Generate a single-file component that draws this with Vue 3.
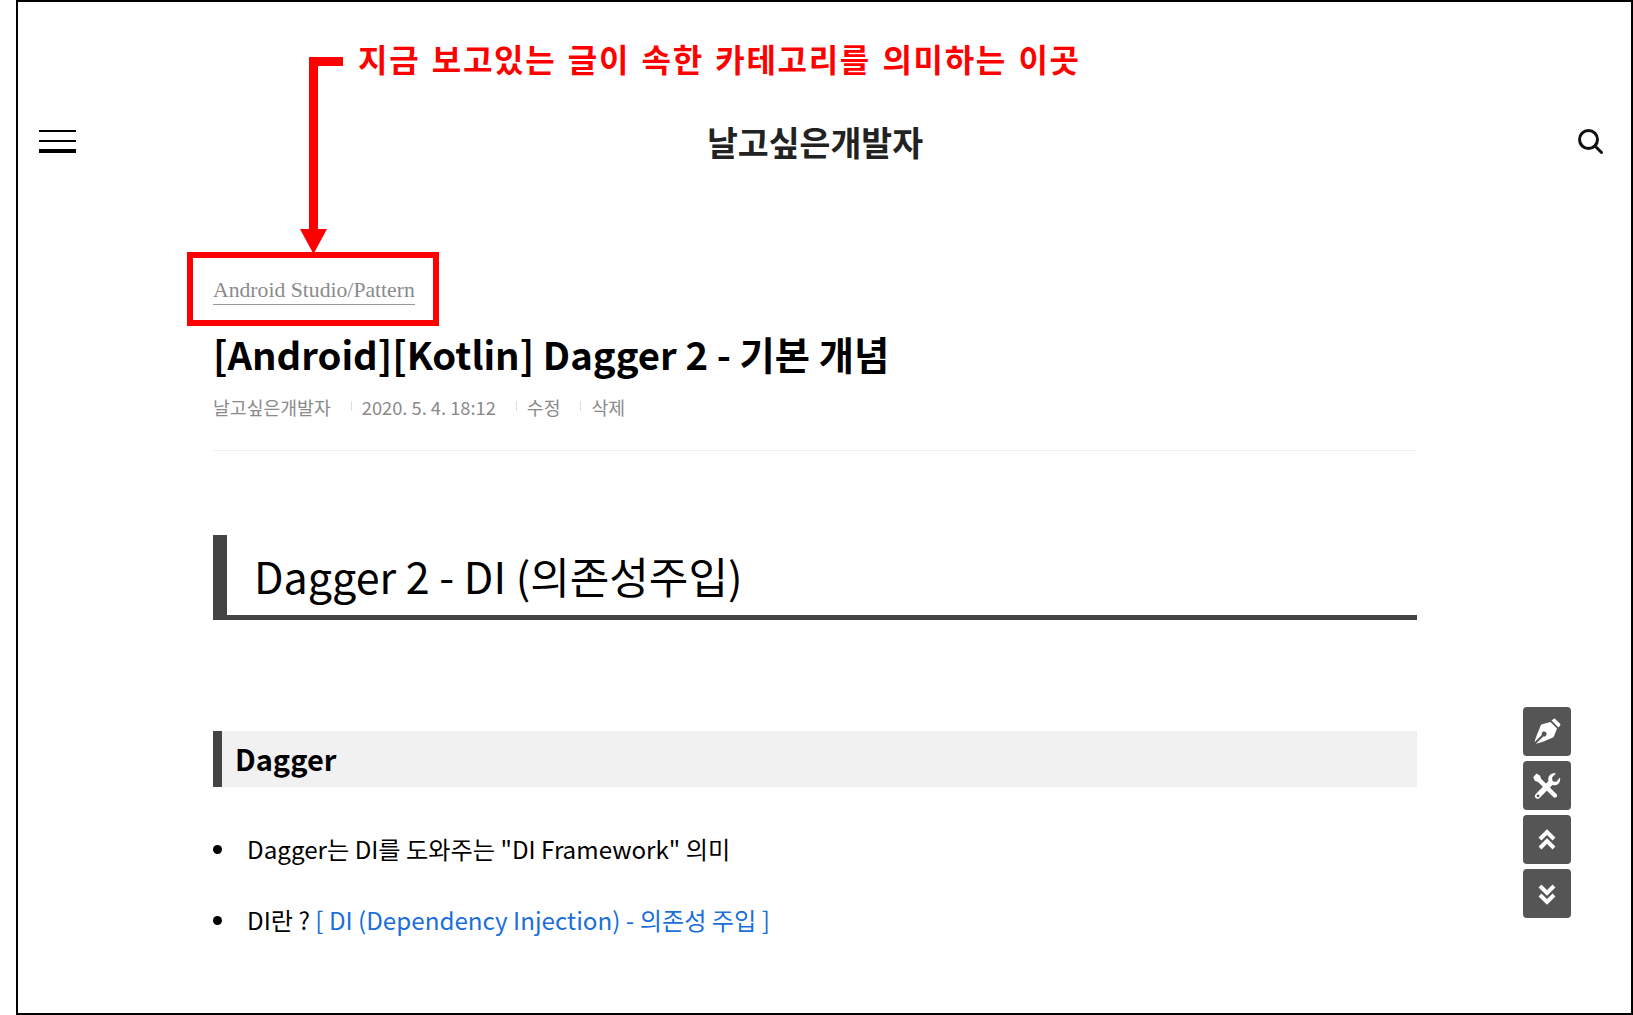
<template>
  <div class="frame">
    <header class="top">
      <div class="burger"><span></span><span></span><span></span></div>
      <div class="blog-name">날고싶은개발자</div>
      <svg class="search" width="26" height="26" viewBox="0 0 26 26" fill="none" stroke="#111" stroke-width="3">
        <circle cx="11.5" cy="11.5" r="9" />
        <path d="M18 18l6.5 6.5" stroke-linecap="round" />
      </svg>
    </header>

    <article class="post">
      <div class="category"><a>Android Studio/Pattern</a></div>
      <h1 class="title">[Android][Kotlin] Dagger 2 - 기본 개념</h1>
      <div class="meta">
        <span v-for="item in metaItems" :key="item">{{ item }}</span>
      </div>

      <h2 class="section">Dagger 2 - DI (의존성주입)</h2>
      <h3 class="sub">Dagger</h3>
      <ul class="list">
        <li>Dagger는 DI를 도와주는 "DI Framework" 의미</li>
        <li>DI란 ? <a>[ DI (Dependency Injection) - 의존성 주입 ]</a></li>
      </ul>
    </article>

    <div class="float-btns">
      <button>
        <svg width="30" height="30" viewBox="0 0 30 30" fill="#fff">
          <path d="M19.600 3.600l1.900-1.700c.6-.5 1.200-.5 1.700 0l4.900 4.900c.5.5.5 1.100 0 1.700l-1.700 1.900z" />
          <path fill-rule="evenodd" d="M18.400 5l6.600 6.600-3 7.600c-.3.800-.8 1.200-1.500 1.500l-9 3.700c-2.500 1-5.200 1.800-7.600 2.400l7.400-7.400a2.500 2.500 0 1 0-1.500-1.500l-7.300 7.400c.6-2.500 1.400-5.100 2.400-7.500l3.700-9c.3-.7.700-1.200 1.500-1.500z" />
        </svg>
      </button>
      <button>
        <svg width="30" height="30" viewBox="0 0 30 30" fill="#fff">
          <path d="M4.500 2.500l3.600 2.200 1 3.100 15.300 15.200c1 1 1 2.200 0 3.100-1 1-2.200 1-3.100 0L6 10.900l-3-.9L1.200 6.300z" />
          <path fill-rule="evenodd" d="M28 6.500c.6 2.500 0 4.900-1.800 6.400-1.700 1.400-3.800 1.700-5.800 1L7.600 26.900c-1.200 1.200-3 1.200-4 .2s-1-2.900.2-4L16.500 10c-.7-2.200-.2-4.400 1.500-6 1.500-1.400 3.700-2 6-1.400l-4 4 .6 3.600 3.500.7zM6 23.500a1.400 1.400 0 1 0 .1 2.800 1.400 1.400 0 0 0-.1-2.800z" />
        </svg>
      </button>
      <button>
        <svg width="24" height="24" viewBox="0 0 24 24" fill="none" stroke="#fff" stroke-width="4">
          <path d="M5 11l7-7 7 7M5 20l7-7 7 7" />
        </svg>
      </button>
      <button>
        <svg width="24" height="24" viewBox="0 0 24 24" fill="none" stroke="#fff" stroke-width="4">
          <path d="M5 4l7 7 7-7M5 13l7 7 7-7" />
        </svg>
      </button>
    </div>

    <!-- red annotation drawn over the screenshot -->
    <div class="note">지금 보고있는 글이 속한 카테고리를 의미하는 이곳</div>
    <svg class="arrow" width="50" height="200" viewBox="0 0 50 200" fill="#f00">
      <path d="M9 0h34v9H18v163h9l-13.500 25L0 172h9z" />
    </svg>
    <div class="note-box"></div>
  </div>
</template>

<script setup>
const metaItems = ['날고싶은개발자', '2020. 5. 4. 18:12', '수정', '삭제'];
</script>

<style>
html,
body {
  background: #fff;
}
</style>

<style scoped>
.frame {
  position: relative;
  box-sizing: border-box;
  margin-left: 16px;
  height: 1015px;
  border: 2px solid #000;
  overflow: hidden;
  font-family: "Noto Sans CJK KR", "Noto Sans", sans-serif;
  color: #000;
}

.top {
  display: grid;
  grid-template-columns: 1fr auto 1fr;
  align-items: center;
  height: 78px;
  margin-top: 100px;
  padding: 0 28px 0 21px;
}

.burger {
  display: flex;
  flex-direction: column;
  gap: 8px;
  width: 37px;
}

.burger span {
  display: block;
  height: 2px;
  background: #000;
}

.burger span:nth-child(2) {
  height: 2.5px;
}

.burger span:last-child {
  height: 3.5px;
  margin-top: -1px;
}

.blog-name {
  margin-right: 12px;
  font-size: 33.6px;
  font-weight: 700;
  color: #222;
}

.search {
  justify-self: end;
}

.post {
  width: 1204px;
  margin-left: 195px;
  padding-top: 96px;
}

.category {
  height: 32px;
  font-family: "Liberation Serif", serif;
  font-size: 21.7px;
  line-height: 28px;
  color: #8a8a8a;
}

.category a {
  display: inline-block;
  border-bottom: 1px solid #999;
}

.title {
  margin: 18px 0 0;
  font-size: 38.3px;
  line-height: 56px;
  font-weight: 700;
}

.meta {
  display: flex;
  align-items: center;
  margin-top: 10px;
  padding-bottom: 28px;
  border-bottom: 1px solid #eee;
  font-size: 18.3px;
  line-height: 30px;
  color: #8a8a8a;
}

.meta span + span {
  position: relative;
  margin-left: 31px;
}

.meta span + span::before {
  content: "";
  position: absolute;
  left: -11px;
  top: 9px;
  width: 1px;
  height: 10px;
  background: #ddd;
}

.section {
  box-sizing: border-box;
  height: 85px;
  margin: 84px 0 0;
  padding-left: 27px;
  border-left: 14px solid #444;
  border-bottom: 5px solid #444;
  font-size: 43px;
  line-height: 80px;
  font-weight: 400;
}

.sub {
  box-sizing: border-box;
  height: 56px;
  margin: 111px 0 0;
  padding-left: 13px;
  border-left: 9px solid #444;
  background: #f1f1f1;
  font-size: 29px;
  line-height: 55px;
  font-weight: 700;
}

.list {
  margin: 0;
  padding: 43px 0 0 34px;
  list-style: none;
  font-size: 24.2px;
  line-height: 38px;
}

.list li {
  position: relative;
}

.list li::before {
  content: "";
  position: absolute;
  left: -34px;
  top: 15px;
  width: 9px;
  height: 9px;
  border-radius: 50%;
  background: #000;
}

.list li + li {
  margin-top: 33px;
}

.list a {
  color: #1a6fdc;
}

.float-btns {
  position: absolute;
  left: 1505px;
  top: 705px;
  display: flex;
  flex-direction: column;
  gap: 5px;
}

.float-btns button {
  display: flex;
  align-items: center;
  justify-content: center;
  width: 48px;
  height: 49px;
  padding: 0;
  border: 0;
  border-radius: 4px;
  background: #555;
}

.note {
  position: absolute;
  left: 340px;
  top: 34px;
  font-size: 32px;
  line-height: 44px;
  font-weight: 700;
  letter-spacing: 1.7px;
  word-spacing: 2.5px;
  color: #f00;
  white-space: nowrap;
}

.arrow {
  position: absolute;
  left: 282px;
  top: 55px;
}

.note-box {
  position: absolute;
  left: 169px;
  top: 250px;
  box-sizing: border-box;
  width: 252px;
  height: 74px;
  border: 6px solid #f00;
}
</style>
